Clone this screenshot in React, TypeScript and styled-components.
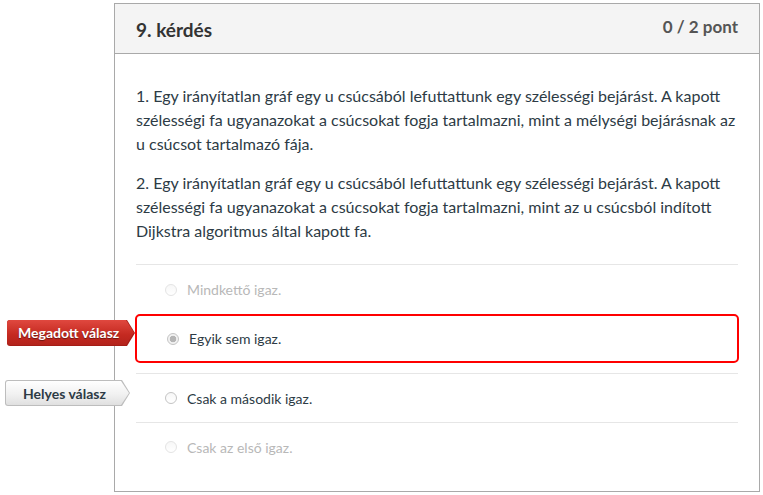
import React from "react";
import styled, { createGlobalStyle } from "styled-components";

interface Answer {
    id: number;
    text: string;
    muted: boolean;
    divider: boolean;
    checked?: boolean;
    marker?: "given" | "correct";
}

const answers: Answer[] = [
    { id: 1, text: "Mindkettő igaz.", muted: true, divider: false },
    { id: 2, text: "Egyik sem igaz.", muted: false, divider: false, checked: true, marker: "given" },
    { id: 3, text: "Csak a második igaz.", muted: false, divider: true, marker: "correct" },
    { id: 4, text: "Csak az első igaz.", muted: true, divider: true },
];

const GlobalStyle = createGlobalStyle`
  html, body {
    margin: 0;
    padding: 0;
    background: #ffffff;
    font-family: Lato, "Liberation Sans", sans-serif;
    color: #2d3b45;
  }
`;

const App: React.FC = () => {
    return (
        <>
            <GlobalStyle />
            <Page>
                <Card>
                    <Header>
                        <Title>9. kérdés</Title>
                        <Points>0 / 2 pont</Points>
                    </Header>
                    <Body>
                        <Paragraph>
                            1. Egy irányítatlan gráf egy u csúcsából lefuttattunk egy szélességi bejárást. A kapott
                            szélességi fa ugyanazokat a csúcsokat fogja tartalmazni, mint a mélységi bejárásnak az
                            u csúcsot tartalmazó fája.
                        </Paragraph>
                        <Paragraph>
                            2. Egy irányítatlan gráf egy u csúcsából lefuttattunk egy szélességi bejárást. A kapott
                            szélességi fa ugyanazokat a csúcsokat fogja tartalmazni, mint az u csúcsból indított
                            Dijkstra algoritmus által kapott fa.
                        </Paragraph>
                        <AnswerList>
                            {answers.map((answer) =>
                                answer.checked ? (
                                    <SelectedRow key={answer.id}>
                                        <GivenTag>
                                            <GivenInner>Megadott válasz</GivenInner>
                                        </GivenTag>
                                        <Radio $muted={answer.muted} $checked />
                                        <AnswerText $muted={answer.muted}>{answer.text}</AnswerText>
                                    </SelectedRow>
                                ) : (
                                    <AnswerRow key={answer.id} $divider={answer.divider}>
                                        {answer.marker === "correct" && (
                                            <CorrectTag>
                                                <CorrectInner>Helyes válasz</CorrectInner>
                                            </CorrectTag>
                                        )}
                                        <Radio $muted={answer.muted} $checked={false} />
                                        <AnswerText $muted={answer.muted}>{answer.text}</AnswerText>
                                    </AnswerRow>
                                )
                            )}
                        </AnswerList>
                    </Body>
                </Card>
            </Page>
        </>
    );
};

const Page = styled.div`
  padding: 3px 0 0 114px;
`;

const Card = styled.div`
  width: 644px;
  height: 487px;
  border: 1px solid #a9a9a9;
  background: #ffffff;
`;

const Header = styled.div`
  height: 49px;
  display: flex;
  align-items: center;
  justify-content: space-between;
  padding: 0 21px;
  background: #f4f4f4;
  border-bottom: 1px solid #a9a9a9;
`;

const Title = styled.div`
  font-size: 19px;
  font-weight: 700;
  color: #333333;
  margin-top: 1px;
`;

const Points = styled.div`
  font-size: 17px;
  font-weight: 700;
  color: #555555;
  margin-top: -5px;
`;

const Body = styled.div`
  padding: 30px 21px 0;
`;

const Paragraph = styled.p`
  margin: 0 0 15px;
  font-size: 16px;
  line-height: 24px;
  color: #2d3b45;
`;

const AnswerList = styled.div`
  display: flex;
  flex-direction: column;
  margin-top: 21px;
  border-top: 1px solid #e6e6e6;
`;

const AnswerRow = styled.div<{ $divider: boolean }>`
  position: relative;
  box-sizing: border-box;
  display: flex;
  align-items: center;
  height: 49px;
  padding-left: 29px;
  border-top: ${(p) => (p.$divider ? "1px solid #e6e6e6" : "none")};
`;

const SelectedRow = styled.div`
  position: relative;
  display: flex;
  align-items: center;
  height: 45px;
  padding-left: 30px;
  margin: 0 -1px 10px;
  border: 2px solid #ff0000;
  border-radius: 5px;
`;

const Radio = styled.span<{ $muted: boolean; $checked: boolean }>`
  box-sizing: border-box;
  width: 12px;
  height: 12px;
  border-radius: 50%;
  border: 1px solid ${(p) => (p.$muted ? "#e4e4e4" : "#c4c4c4")};
  background: ${(p) =>
    p.$checked
        ? "radial-gradient(circle, #b5b5b5 0 3px, #f2f2f2 3.6px)"
        : "linear-gradient(#f7f7f7, #ffffff)"};
  margin-right: 10px;
  flex-shrink: 0;
`;

const AnswerText = styled.span<{ $muted: boolean }>`
  font-size: 14px;
  color: ${(p) => (p.$muted ? "#b8b8b8" : "#2d3b45")};
`;

const GivenTag = styled.div`
  position: absolute;
  right: calc(100% + 2px);
  top: 4px;
  width: 128px;
  height: 26px;
  background: #a51d16;
  clip-path: polygon(0 0, 120px 0, 128px 50%, 120px 100%, 0 100%);
  border-radius: 3px 0 0 3px;
`;

const GivenInner = styled.div`
  position: absolute;
  inset: 0 1px 1px 0;
  display: flex;
  align-items: center;
  padding-left: 11px;
  background: linear-gradient(#e0483f, #c42920 60%, #b3231b);
  clip-path: polygon(0 0, 119px 0, 127px 50%, 119px 100%, 0 100%);
  border-radius: 3px 0 0 3px;
  font-size: 14px;
  font-weight: 700;
  color: #ffffff;
  text-shadow: 0 1px 1px rgba(0, 0, 0, 0.45);
`;

const CorrectTag = styled.div`
  position: absolute;
  right: calc(100% + 6px);
  top: 6px;
  width: 125px;
  height: 26px;
  background: #bdbdbd;
  clip-path: polygon(0 0, 117px 0, 125px 50%, 117px 100%, 0 100%);
  border-radius: 3px 0 0 3px;
`;

const CorrectInner = styled.div`
  position: absolute;
  inset: 1px 1px 1px 1px;
  display: flex;
  align-items: center;
  padding-left: 17px;
  background: linear-gradient(#ffffff, #f1f1f1 55%, #e0e0e0);
  clip-path: polygon(0 0, 115px 0, 123px 50%, 115px 100%, 0 100%);
  border-radius: 2px 0 0 2px;
  font-size: 14px;
  font-weight: 700;
  color: #2d3b45;
`;

export default App;
